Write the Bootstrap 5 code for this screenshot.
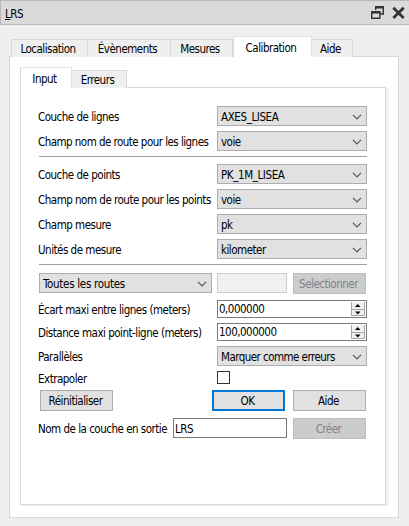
<!DOCTYPE html>
<html lang="fr">
<head>
<meta charset="utf-8">
<meta name="viewport" content="width=device-width, initial-scale=1">
<title>LRS</title>
<link href="https://cdn.jsdelivr.net/npm/bootstrap@5.3.0/dist/css/bootstrap.min.css" rel="stylesheet">
<style>
body{background:#efefef;font-family:"DejaVu Sans Condensed","DejaVu Sans",sans-serif;font-stretch:condensed;font-size:11.5px;line-height:14px;color:#000;height:526px;overflow:hidden;letter-spacing:-.5px}
.dock-title{height:25px;background:#dadada;border:1px solid #b8b8b8;border-right:0;padding:2px 4px 0 4px}
.outer-tabs{margin:11px 0 0 11px;height:20px}
.inner-tabs{height:20px}
.nav-tabs.dock-tabs{border:0;position:relative;z-index:1}
.dock-tabs .nav-link{border:1px solid #d9d9d9;border-bottom:0;border-left:0;border-radius:0;background:#efefef;color:#000;padding:2px 3px 0 0;height:18px;text-align:center}
.dock-tabs .nav-item:first-child .nav-link{border-left:1px solid #d9d9d9}
.dock-tabs .nav-link.active{background:#fff;height:21px;margin-bottom:-1px;border-left:1px solid #d9d9d9;padding-top:4px}
.w-loc{width:77px}.w-eve{width:83px}.w-mes{width:62px}.w-cal{width:79px}.w-aid{width:41px}
.w-inp{width:52px}.w-err{width:55px}
.outer-panel{margin-left:9px;width:390px;height:462px;background:#fff;border:1px solid #d9d9d9;padding:10px 0 0 10px}
.inner-panel{width:366px;height:418px;background:#fff;border:1px solid #d9d9d9;box-shadow:2px 1px 0 #efefef;padding:18px 18px 0 18px}
.line{display:flex;align-items:center;height:20px;margin-bottom:5px;width:328px;white-space:nowrap}
.line .cap{width:179px;flex:none;margin-left:-1px;padding-top:2px}
.tight .cap{width:135px;padding-top:4px}
.long{letter-spacing:-.54px}
.rule{height:1px;width:328px;background:#a0a0a0;margin-bottom:7px}
.combo{width:150px;height:20px;flex:none;border:1px solid #adadad;background:#e1e1e1;display:flex;align-items:center;justify-content:space-between;padding:1px 4px 0 3px}
.combo.wide{width:173px;letter-spacing:-.3px}
.caps{letter-spacing:-.4px}
.digits{letter-spacing:-.5px}
.field{height:20px;border:1px solid #7a7a7a;background:#fff;padding:3px 1px 0;flex:none}
.field.out{width:114px}
.field.off{width:70px;margin-left:5px;border-color:#ccc;background:#f0f0f0}
.spin{width:150px;height:18px;border:1px solid #7a7a7a;background:#fff;padding:0 1px 0 1px;display:flex;align-items:center;justify-content:space-between;flex:none}
.push{width:73px;height:21px;border:1px solid #adadad;background:#e1e1e1;border-radius:0;color:#000;padding:1px 2px 0 0;font-size:inherit;line-height:18px;letter-spacing:-.5px;text-align:center;flex:none}
.push.main{border:2px solid #0078d7;line-height:16px}
.push:disabled{background:#ccc;border-color:#bfbfbf;color:#838383;opacity:1}
.gap-push{margin-left:6px}
.tick{width:13px;height:13px;border:1px solid #333;background:#fff}
.line.h-spin{height:18px}
.line.h-tick{height:13px;margin-bottom:6px}
.line.h-push{height:21px;margin-bottom:6px}
.line.actions{padding:0 1px;margin-bottom:7px}
svg{display:block;flex:none}
</style>
<script src="https://cdn.jsdelivr.net/npm/bootstrap@5.3.0/dist/js/bootstrap.bundle.min.js"></script>
</head>
<body>
<svg width="0" height="0" class="d-none">
  <symbol id="chev" viewBox="0 0 10 6"><path d="M1 .8 5 4.800 9 .8" fill="none" stroke="#555" stroke-width="1.2"/></symbol>
  <symbol id="steps" viewBox="0 0 14 16"><path d="M0 1h14v14H0z" fill="#f0f0f0"/><path d="M.5 1v14M0 14.500h14M0 8.500h14M13.500 1v14" fill="none" stroke="#a6a6a6"/><path d="M4 6h5.500L6.750 3zM4 10.500h5.500L6.750 13.500z" fill="#000"/></symbol>
</svg>
<header class="dock-title d-flex justify-content-between">
  <span class="pt-1"><u>L</u>RS</span>
  <span class="d-flex gap-2">
    <svg width="13" height="17" viewBox="0 0 13 17"><path d="M4.700 7V4h7.600v7H9" fill="none" stroke="#333" stroke-width="1.400"/><path d="M4 3h9v2.500H4zM0 8h9.500v2.500H0z" fill="#333"/><path d="M.700 9v6.300h8.100V9" fill="none" stroke="#333" stroke-width="1.400"/></svg>
    <svg width="13" height="17" viewBox="0 0 13 17"><path d="M1.300 4.700 11.700 15M11.700 4.700 1.300 15" stroke="#333" stroke-width="2.700"/></svg>
  </span>
</header>
<ul class="nav nav-tabs dock-tabs outer-tabs align-items-end flex-nowrap">
  <li class="nav-item"><a class="nav-link w-loc">Localisation</a></li>
  <li class="nav-item"><a class="nav-link w-eve">Évènements</a></li>
  <li class="nav-item"><a class="nav-link w-mes">Mesures</a></li>
  <li class="nav-item"><a class="nav-link active w-cal">Calibration</a></li>
  <li class="nav-item"><a class="nav-link w-aid">Aide</a></li>
</ul>
<main class="outer-panel">
  <ul class="nav nav-tabs dock-tabs inner-tabs align-items-end flex-nowrap">
    <li class="nav-item"><a class="nav-link active w-inp">Input</a></li>
    <li class="nav-item"><a class="nav-link w-err">Erreurs</a></li>
  </ul>
  <section class="inner-panel">
    <div class="line"><span class="cap">Couche de lignes</span><div class="combo caps">AXES_LISEA<svg width="10" height="6"><use href="#chev"/></svg></div></div>
    <div class="line"><span class="cap long">Champ nom de route pour les lignes</span><div class="combo">voie<svg width="10" height="6"><use href="#chev"/></svg></div></div>
    <div class="rule"></div>
    <div class="line"><span class="cap">Couche de points</span><div class="combo caps">PK_1M_LISEA<svg width="10" height="6"><use href="#chev"/></svg></div></div>
    <div class="line"><span class="cap">Champ nom de route pour les points</span><div class="combo">voie<svg width="10" height="6"><use href="#chev"/></svg></div></div>
    <div class="line"><span class="cap">Champ mesure</span><div class="combo">pk<svg width="10" height="6"><use href="#chev"/></svg></div></div>
    <div class="line"><span class="cap">Unités de mesure</span><div class="combo">kilometer<svg width="10" height="6"><use href="#chev"/></svg></div></div>
    <div class="rule mb-2"></div>
    <div class="line h-push align-items-start">
      <div class="combo wide">Toutes les routes<svg width="10" height="6"><use href="#chev"/></svg></div>
      <div class="field off"></div>
      <button class="btn push gap-push" disabled>Selectionner</button>
    </div>
    <div class="line h-spin"><span class="cap">Écart maxi entre lignes (meters)</span><div class="spin digits">0,000000<svg width="14" height="16"><use href="#steps"/></svg></div></div>
    <div class="line h-spin"><span class="cap">Distance maxi point-ligne (meters)</span><div class="spin digits">100,000000<svg width="14" height="16"><use href="#steps"/></svg></div></div>
    <div class="line"><span class="cap">Parallèles</span><div class="combo long">Marquer comme erreurs<svg width="10" height="6"><use href="#chev"/></svg></div></div>
    <div class="line h-tick"><span class="cap">Extrapoler</span><div class="tick"></div></div>
    <div class="line h-push actions">
      <button class="btn push">Réinitialiser</button>
      <button class="btn push main ms-auto">OK</button>
      <button class="btn push ms-2">Aide</button>
    </div>
    <div class="line h-push align-items-start tight"><span class="cap">Nom de la couche en sortie</span><div class="field out">LRS</div><button class="btn push gap-push" disabled>Créer</button></div>
  </section>
</main>
</body>
</html>
